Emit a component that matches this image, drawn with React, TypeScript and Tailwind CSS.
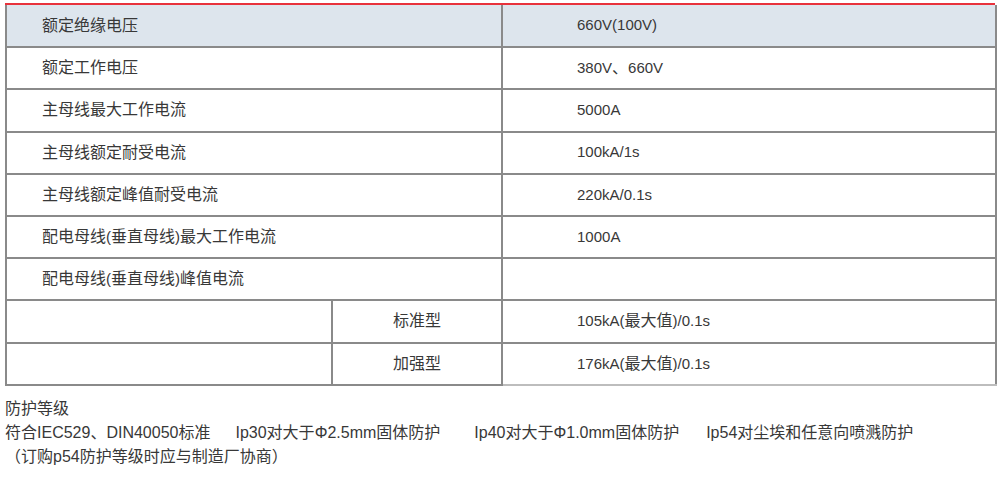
import React from "react";

interface Row {
  label: string;
  value: string;
  sub?: string;
  head?: boolean;
}

const rows: Row[] = [
  { label: "额定绝缘电压", value: "660V(100V)", head: true },
  { label: "额定工作电压", value: "380V、660V" },
  { label: "主母线最大工作电流", value: "5000A" },
  { label: "主母线额定耐受电流", value: "100kA/1s" },
  { label: "主母线额定峰值耐受电流", value: "220kA/0.1s" },
  { label: "配电母线(垂直母线)最大工作电流", value: "1000A" },
  { label: "配电母线(垂直母线)峰值电流", value: "" },
  { label: "", sub: "标准型", value: "105kA(最大值)/0.1s" },
  { label: "", sub: "加强型", value: "176kA(最大值)/0.1s" },
];

const font = {
  fontFamily: '"Liberation Sans", "Noto Sans CJK SC", sans-serif',
};

// CJK glyphs in the shot are a touch bigger than the latin ones
function T({ text }: { text: string }) {
  const parts = text.match(/[\u3000-\u9fff\uff00-\uffef]+|[^\u3000-\u9fff\uff00-\uffef]+/g) || [];
  return (
    <>
      {parts.map((p, i) =>
        /[\u3000-\u9fff\uff00-\uffef]/.test(p) ? (
          <span key={i} className="text-[16px]">
            {p}
          </span>
        ) : (
          <span key={i}>{p}</span>
        )
      )}
    </>
  );
}

export default function App() {
  return (
    <div className="w-[1000px] h-[477px] bg-white text-[#383838] text-[15px]" style={font}>
      <div className="pt-[3px] pl-[5px] pr-[5px]">
        <div className="h-[2px] bg-[#e8323c]" />
        <table className="w-[990px] border-collapse table-fixed">
          <colgroup>
            <col className="w-[326px]" />
            <col className="w-[170px]" />
            <col className="w-[494px]" />
          </colgroup>
          <tbody>
            {rows.map((r, i) => (
              <tr
                key={i}
                className={`h-[42.2px] ${r.head ? "bg-[#dde5ed]" : "bg-white"}`}
              >
                {r.sub !== undefined ? (
                  <>
                    <td className="border-2 border-[#8a8a8a]" />
                    <td className="border-2 border-[#8a8a8a] text-center">
                      <T text={r.sub} />
                    </td>
                  </>
                ) : (
                  <td
                    colSpan={2}
                    className="border-2 border-[#8a8a8a] border-t-0 pl-[35px]"
                  >
                    <T text={r.label} />
                  </td>
                )}
                <td
                  className={`border-2 border-[#8a8a8a] pl-[74px] ${
                    r.head ? "border-t-0" : ""
                  } ${i === rows.length - 1 ? "border-b-[#bdbdbd]" : ""}`}
                >
                  <T text={r.value} />
                </td>
              </tr>
            ))}
          </tbody>
        </table>
        <div className="mt-[11px] leading-[24px] text-[16px]">
          <p>
            <T text="防护等级" />
          </p>
          <p>
            <span>
              <T text="符合IEC529、DIN40050标准" />
            </span>
            <span className="ml-[25px]">
              <T text="Ip30对大于Φ2.5mm固体防护" />
            </span>
            <span className="ml-[34px]">
              <T text="Ip40对大于Φ1.0mm固体防护" />
            </span>
            <span className="ml-[27px]">
              <T text="Ip54对尘埃和任意向喷溅防护" />
            </span>
          </p>
          <p>
            <T text="（订购p54防护等级时应与制造厂协商）" />
          </p>
        </div>
      </div>
    </div>
  );
}
